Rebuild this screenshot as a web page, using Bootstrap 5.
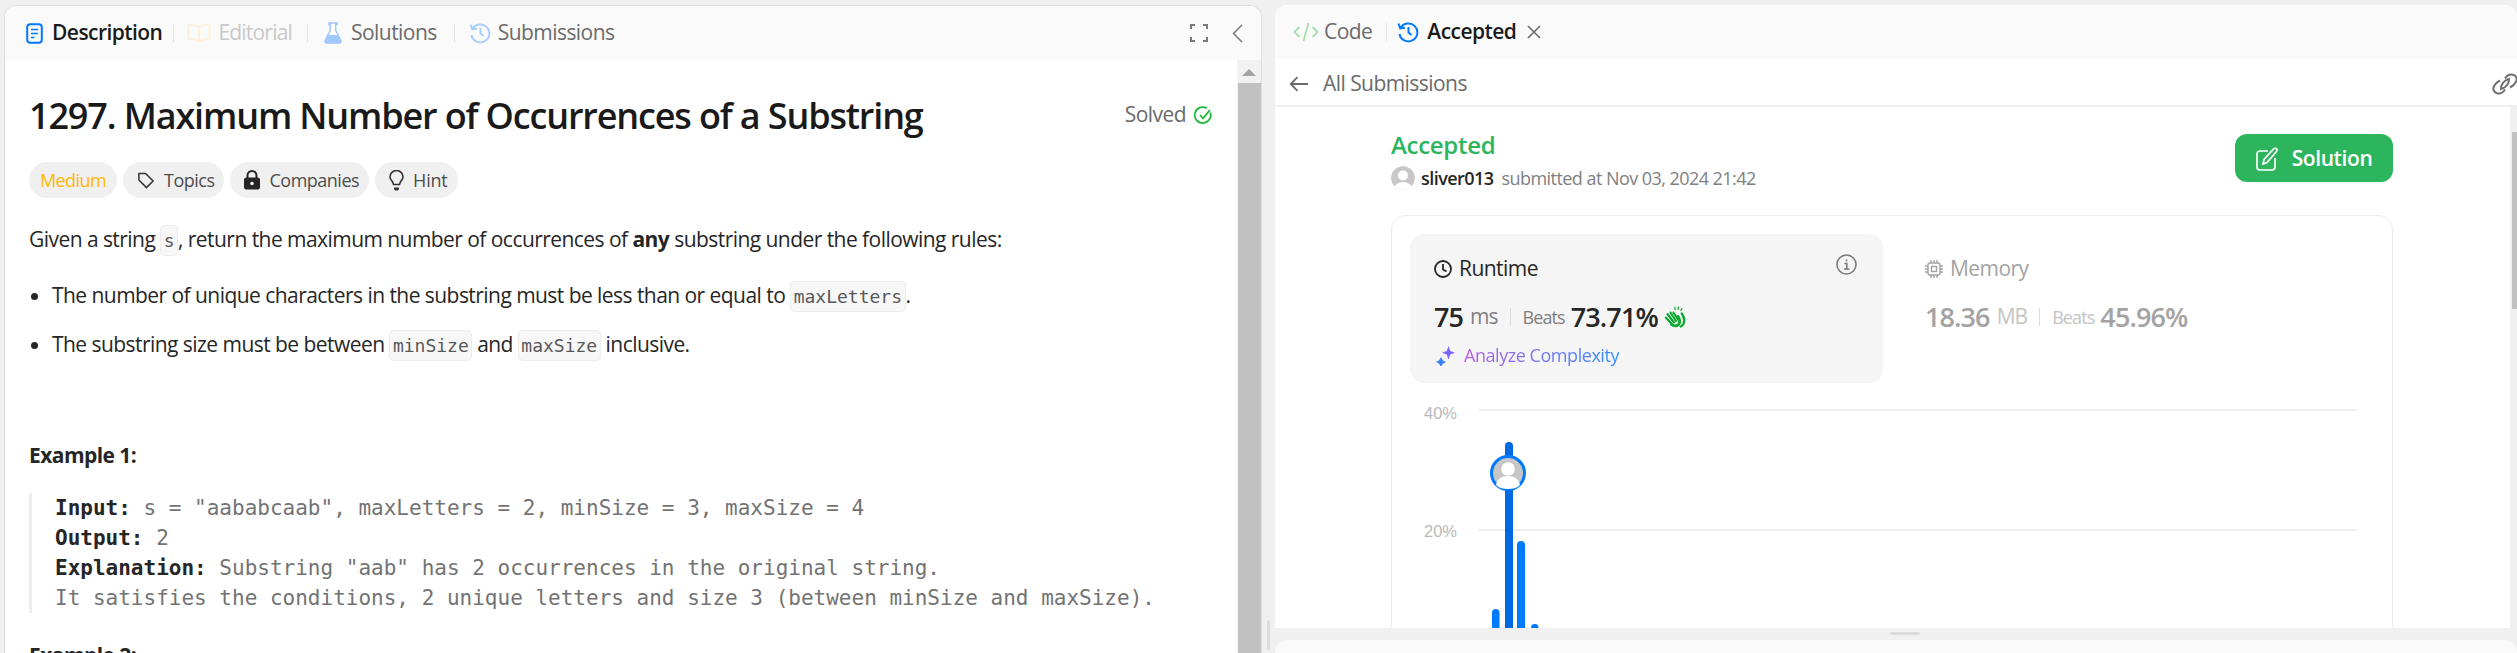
<!DOCTYPE html>
<html lang="en">

<head>
  <meta charset="UTF-8">
  <meta name="viewport" content="width=device-width, initial-scale=1.0">
  <title>1297. Maximum Number of Occurrences of a Substring</title>
  <link href="https://cdn.jsdelivr.net/npm/bootstrap@5.3.3/dist/css/bootstrap.min.css" rel="stylesheet">
  <script src="https://cdn.jsdelivr.net/npm/bootstrap@5.3.3/dist/js/bootstrap.bundle.min.js"></script>
  <style>
    html, body { height: 653px; overflow: hidden; }
    body { background: #f0f0f0; font-family: "Open Sans", "Noto Sans", sans-serif; font-size: 21px; color: #262626; letter-spacing: -.55px; }
    svg { display: block; flex: none; }
    .workspace { padding: 5px 0 0 4px; height: 653px; }

    /* left panel */
    .left-panel { width: 1258px; height: 648px; background: #fff; border: 1px solid #dedede; border-bottom: 0; border-radius: 12px 12px 0 0; overflow: hidden; }
    .tabbar { height: 54px; background: #fafafa; flex: none; }
    .left-tabs { padding: 0 18px 0 21px; }
    .tab { color: #6b6b6b; height: 54px; gap: 9px; }
    .tab-on { color: #1a1a1a; font-weight: 600; }
    .tab-off { color: #c9c9c9; letter-spacing: -.8px; }
    .tab-tight { gap: 7px; }
    .tab-sep { width: 1px; height: 18px; background: #e4e4e4; flex: none; margin: 0 14px; }
    .sep-a { margin: 0 13px 0 11px; }
    .sep-b { margin: 0 16px 0 15px; }
    .sep-c { margin: 0 14px 0 17px; }
    .left-scroll { width: 24px; background: #f1f1f1; flex: none; }
    .left-scroll .arrow-up { width: 0; height: 0; margin: 9px auto 7px; border: 7px solid transparent; border-top: 0; border-bottom: 7px solid #a3a3a3; }
    .left-scroll .thumb { margin-left: 1px; background: #c1c1c1; height: 600px; }
    .problem { padding: 0 0 0 24px; min-width: 0; overflow: hidden; }
    .problem-title { font-size: 36px; line-height: 54px; font-weight: 600; margin: 29px 0 19px; color: #1a1a1a; letter-spacing: -1.15px; }
    .solved { color: #6b6b6b; margin: 8px 24px 0 0; gap: 8px; }
    .chips { gap: 6px; }
    .chip { height: 36px; border-radius: 18px; background: #f0f0f0; font-size: 18px; padding: 0 10px 0 14px; color: #4d4d4d; gap: 9px; letter-spacing: -.5px; }
    .chip-medium { color: #ffb800; padding: 0 11px; letter-spacing: -.6px; }
    .chip-hint { letter-spacing: -.2px; }
    .problem p { line-height: 30px; margin: 0; }
    .first-para { margin-top: 26px !important; }
    .problem ul { padding-left: 23px; margin: 26px 0 0; line-height: 30px; }
    .problem li + li { margin-top: 19px; }
    .inline-code { font-family: "DejaVu Sans Mono", monospace; font-size: 18px; line-height: 1; letter-spacing: 0; color: #595959; background: #f7f7f7; border: 1px solid #ececec; border-radius: 5px; padding: 4px 2.5px; }
    .example-name { font-weight: 700; margin-top: 81px !important; }
    .example-next { margin-top: 0 !important; }
    .example-quote { border-left: 3px solid #ededed; margin: 23px 0 27px; padding-left: 23px; font-family: "DejaVu Sans Mono", monospace; letter-spacing: 0; line-height: 30px; color: #737373; }
    .example-quote div { white-space: nowrap; }
    .example-quote b { color: #262626; }

    /* gutters */
    .gutter-v { width: 13px; flex: none; }
    .gutter-v span { display: block; width: 3px; height: 30px; background: #dcdcdc; border-radius: 2px; margin: 615px 0 0 5px; }
    .gutter-h { height: 12px; flex: none; }
    .gutter-h span { display: block; width: 30px; height: 3px; background: #dcdcdc; border-radius: 2px; margin: 4px auto 0 615px; }

    /* right panel */
    .right-col { width: 1242px; }
    .right-panel { height: 623px; background: #fff; border-radius: 12px 12px 0 0; overflow: hidden; flex: none; }
    .lower-panel { background: #fafafa; border-radius: 12px 12px 0 0; }
    .right-tabs { padding-left: 18px; }
    .code-tab { gap: 5px; }
    .accepted-tab { margin-left: -4px; gap: 8px; }
    .tab-close { margin-left: 11px; }
    .crumbs { height: 48px; border-bottom: 2px solid #efefef; flex: none; color: #6b6b6b; padding: 4px 0 0 14px; }
    .crumbs span { margin-left: 15px; }
    .link-ico { margin-left: auto; margin-right: -1px; }
    .panel-fill { min-height: 0; }
    .right-scroll { width: 7px; background: #f0f0f0; flex: none; }
    .right-scroll div { margin: 25px 0 0 2px; width: 5px; height: 177px; background: #c1c1c1; }
    .sub-body { min-width: 0; padding-left: 116px; overflow: hidden; }
    .sub-inner { width: 1002px; }
    .sub-head { padding-top: 22px; }
    .verdict { font-size: 24px; font-weight: 600; color: #2cb55d; line-height: 32px; letter-spacing: -.3px; }
    .who { font-size: 18px; line-height: 24px; color: #808080; margin-top: 5px; letter-spacing: -.55px; }
    .who b { color: #262626; font-weight: 600; }
    .who-pic { width: 24px; height: 24px; border-radius: 50%; margin-right: 6px; }
    .solution-btn { background: #2db55d; border-radius: 12px; color: #fff; width: 158px; height: 48px; font-size: 21px; font-weight: 600; margin-top: 5px; gap: 14px; letter-spacing: -.4px; padding-top: 1px; }
    .stats-card { margin-top: 25px; border: 1px solid #ededed; border-radius: 14px; height: 600px; }
    .stats-row { padding: 18px 0 0 18px; }
    .stat-box { width: 473px; height: 149px; padding: 0 0 0 24px; border-radius: 14px; background: #f5f5f5; }
    .stat-mem { padding: 0 0 0 42px; color: #a3a3a3; }
    .stat-head { height: 63px; padding-top: 6px; gap: 7px; }
    .info-ico { margin: -8px 26px 0 auto; }
    .stat-num { font-size: 27px; font-weight: 600; line-height: 40px; letter-spacing: -.9px; }
    .stat-unit { font-size: 21px; color: #808080; margin-left: 7px; letter-spacing: -1px; }
    .stat-sep { width: 1px; height: 18px; background: #dcdcdc; margin: 0 12px; }
    .stat-beats { font-size: 18px; color: #808080; margin-right: 6px; letter-spacing: -.9px; }
    .stat-mem .stat-num { color: #a3a3a3; }
    .stat-mem .stat-unit { color: #c4c4c4; }
    .stat-mem .stat-beats { color: #c4c4c4; }
    .clap-ico { margin-left: 6px; }
    .analyze { font-size: 18px; margin-top: 5px; gap: 8px; padding-left: 2px; letter-spacing: -.45px; }
    .analyze span { background: linear-gradient(90deg, #b65de6, #2f8cff); -webkit-background-clip: text; background-clip: text; color: transparent; }
    .chart text { font-family: "Liberation Sans", sans-serif; font-size: 16.5px; fill: #b8b8b8; letter-spacing: 0; }
  </style>
</head>

<body>
  <div class="workspace d-flex">

    <!-- Problem panel -->
    <div class="left-panel d-flex flex-column">
      <div class="tabbar left-tabs d-flex align-items-center">
        <div class="tab tab-on d-flex align-items-center">
          <svg width="17" height="21" viewBox="0 0 17 21" fill="none" stroke="#007aff" stroke-width="2"><rect x="1.2" y="1.2" width="14.6" height="18.6" rx="3"/><path d="M5 6.500h7M5 10.500h7M5 14.500h3.500" stroke-width="1.600"/></svg>
          <span>Description</span>
        </div>
        <div class="tab-sep sep-a"></div>
        <div class="tab tab-off tab-tight d-flex align-items-center">
          <svg width="24" height="20" viewBox="0 0 24 20" fill="none" stroke="#fdf0dc" stroke-width="2"><path d="M12 4.500C10 2.500 6 1.500 1.500 1.500v14.500c4.500 0 8.500 1 10.500 2.500 2-1.500 6-2.500 10.500-2.500V1.500C18 1.500 14 2.500 12 4.500zM12 4.500v14"/></svg>
          <span>Editorial</span>
        </div>
        <div class="tab-sep sep-b"></div>
        <div class="tab d-flex align-items-center">
          <svg width="18" height="22" viewBox="0 0 18 22"><path d="M5 1h8v1.500h-1.300v5.800l5.200 10.200c.7 1.400-.2 2.500-1.600 2.500H2.700c-1.400 0-2.300-1.100-1.600-2.500L6.300 8.300V2.500H5z" fill="#fff" stroke="#a3c8ff" stroke-width="1.500"/><path d="M3.800 13h10.400l2.700 5.500c.7 1.400-.2 2.500-1.600 2.500H2.700c-1.400 0-2.300-1.100-1.600-2.500z" fill="#a3c8ff"/></svg>
          <span>Solutions</span>
        </div>
        <div class="tab-sep sep-c"></div>
        <div class="tab tab-tight d-flex align-items-center">
          <svg width="22" height="22" viewBox="0 0 22 22" fill="none" stroke="#a8d0ff" stroke-width="2"><path d="M3.500 7a9 9 0 1 1-1 6M1.500 2.500l1.700 4.800 4.800-.6M11.500 6v5.500l3 2.500"/></svg>
          <span>Submissions</span>
        </div>
        <svg class="ms-auto" width="18" height="18" viewBox="0 0 18 18" fill="none" stroke="#7a7a7a" stroke-width="2"><path d="M1 5V1h4M13 1h4v4M17 13v4h-4M5 17H1v-4"/></svg>
        <svg class="ms-4" width="11" height="19" viewBox="0 0 11 19" fill="none" stroke="#7a7a7a" stroke-width="1.500"><path d="M10 1 1.500 9.500 10 18"/></svg>
      </div>
      <div class="d-flex flex-grow-1 panel-fill">
        <div class="problem flex-grow-1">
          <div class="d-flex justify-content-between align-items-center">
            <h1 class="problem-title">1297. Maximum Number of Occurrences of a Substring</h1>
            <div class="solved d-flex align-items-center">
              <span>Solved</span>
              <svg width="19" height="19" viewBox="0 0 19 19" fill="none" stroke="#1cba3a" stroke-width="1.800"><path d="M16.300 6.500a8 8 0 1 1-3.500-4.300M6 9l3 3.300 7-8.300"/></svg>
            </div>
          </div>
          <div class="chips d-flex">
            <div class="chip chip-medium d-flex align-items-center">Medium</div>
            <div class="chip d-flex align-items-center">
              <svg width="18" height="19" viewBox="0 0 19 19" fill="none" stroke="#333" stroke-width="1.600"><path d="M2 2h7l8 8-7 7-8-8zM5.500 5.500h.1"/></svg>
              <span>Topics</span>
            </div>
            <div class="chip d-flex align-items-center">
              <svg width="16" height="20" viewBox="0 0 16 20"><path d="M3.500 8V5.500a4.500 4.500 0 0 1 9 0V8" fill="none" stroke="#262626" stroke-width="2"/><rect x="0" y="7.500" width="16" height="12" rx="2.500" fill="#262626"/><circle cx="8" cy="13.500" r="1.800" fill="#f0f0f0"/></svg>
              <span>Companies</span>
            </div>
            <div class="chip chip-hint d-flex align-items-center">
              <svg width="15" height="21" viewBox="0 0 15 21" fill="none" stroke="#333" stroke-width="1.600"><path d="M4.500 14.500C4 11 1 10 1 7a6.500 6.500 0 0 1 13 0c0 3-3 4-3.500 7.500z"/><path d="M5 17.500h5v1.500l-1 1.500H6L5 19z" fill="#333" stroke="none"/></svg>
              <span>Hint</span>
            </div>
          </div>
          <p class="first-para">Given a string <code class="inline-code">s</code>, return the maximum number of occurrences of <b>any</b> substring under the following rules:</p>
          <ul>
            <li>The number of unique characters in the substring must be less than or equal to <code class="inline-code">maxLetters</code>.</li>
            <li>The substring size must be between <code class="inline-code">minSize</code> and <code class="inline-code">maxSize</code> inclusive.</li>
          </ul>
          <p class="example-name">Example 1:</p>
          <div class="example-quote">
            <div><b>Input:</b> s = "aababcaab", maxLetters = 2, minSize = 3, maxSize = 4</div>
            <div><b>Output:</b> 2</div>
            <div><b>Explanation:</b> Substring "aab" has 2 occurrences in the original string.</div>
            <div>It satisfies the conditions, 2 unique letters and size 3 (between minSize and maxSize).</div>
          </div>
          <p class="example-name example-next">Example 2:</p>
        </div>
        <div class="left-scroll">
          <div class="arrow-up"></div>
          <div class="thumb"></div>
        </div>
      </div>
    </div>

    <div class="gutter-v"><span></span></div>

    <div class="right-col d-flex flex-column">
      <!-- Submission panel -->
      <div class="right-panel d-flex flex-column">
        <div class="tabbar right-tabs d-flex align-items-center">
          <div class="tab code-tab d-flex align-items-center">
            <svg width="26" height="20" viewBox="0 0 26 20" fill="none" stroke="#a5dfae" stroke-width="1.800"><path d="M6.500 5 1.500 10l5 5M19.500 5l5 5-5 5M15.500 1l-5 18"/></svg>
            <span>Code</span>
          </div>
          <div class="tab-sep"></div>
          <div class="tab tab-on accepted-tab d-flex align-items-center">
            <svg width="22" height="22" viewBox="0 0 22 22" fill="none" stroke="#007aff" stroke-width="2"><path d="M3.500 7a9 9 0 1 1-1 6M1.500 2.500l1.700 4.800 4.800-.6M11.500 6v5.500l3 2.500"/></svg>
            <span>Accepted</span>
          </div>
          <svg class="tab-close" width="14" height="14" viewBox="0 0 14 14" fill="none" stroke="#6b6b6b" stroke-width="1.600"><path d="M1 1l12 12M13 1 1 13"/></svg>
        </div>
        <div class="crumbs d-flex align-items-center">
          <svg width="19" height="16" viewBox="0 0 19 16" fill="none" stroke="#6b6b6b" stroke-width="1.800"><path d="M19 8H2M8.500 1.200 1.700 8l6.800 6.800"/></svg>
          <span>All Submissions</span>
          <svg class="link-ico" width="26" height="22" viewBox="0 0 26 22" fill="none" stroke="#707070" stroke-width="2"><path d="M13 5.500C15 2.500 18 1 21 1.800c3.500 1 4.500 4 3 7-1 2-3.500 4.500-6 5.700M13 16.500c-2 3-5 4.500-8 3.700-3.500-1-4.500-4-3-7 1-2 3.500-4.500 6-5.700M9.500 17c-1.500-3 1-7.500 4-9.500 2-1.300 3.500-1.500 4.500-1.200M16.500 5c1.500 3-1 7.500-4 9.500-2 1.300-3.500 1.500-4.500 1.200"/></svg>
        </div>
        <div class="d-flex flex-grow-1 panel-fill">
          <div class="sub-body flex-grow-1">
            <div class="sub-inner">
              <div class="sub-head d-flex justify-content-between">
                <div>
                  <div class="verdict">Accepted</div>
                  <div class="who d-flex align-items-center">
                    <svg class="who-pic" viewBox="0 0 24 24"><circle cx="12" cy="12" r="12" fill="#c8c8c8"/><circle cx="12" cy="9.500" r="5" fill="#fff"/><ellipse cx="12" cy="23" rx="9" ry="7" fill="#fff"/></svg>
                    <b>sliver013</b><span class="ms-2">submitted at Nov 03, 2024 21:42</span>
                  </div>
                </div>
                <div class="solution-btn d-flex align-items-center justify-content-center">
                  <svg width="22" height="24" viewBox="0 0 22 24" fill="none" stroke="#fff" stroke-width="1.700"><path d="M12 4H4a3 3 0 0 0-3 3v13a3 3 0 0 0 3 3h12a3 3 0 0 0 3-3v-9"/><path d="M7 17l1-4.500L17.500 2c1-1 2.500-1 3.200 0s.3 2-.7 3L11 15.500z"/></svg>
                  <span>Solution</span>
                </div>
              </div>
              <div class="stats-card">
                <div class="stats-row d-flex">
                  <div class="stat-box">
                    <div class="stat-head d-flex align-items-center">
                      <svg width="18" height="18" viewBox="0 0 18 18" fill="none" stroke="#262626" stroke-width="1.800"><circle cx="9" cy="9" r="8"/><path d="M9 4v5.500l3.500 2"/></svg>
                      <span>Runtime</span>
                      <svg class="info-ico" width="21" height="21" viewBox="0 0 21 21" fill="none" stroke="#7a7a7a" stroke-width="1.600"><circle cx="10.500" cy="10.500" r="9.500"/><path d="M8.500 9.500h2.300V15M8 15h5.500M10.500 5.500v1.800"/></svg>
                    </div>
                    <div class="d-flex align-items-center">
                      <span class="stat-num">75</span><span class="stat-unit">ms</span><span class="stat-sep"></span><span class="stat-beats">Beats</span><span class="stat-num">73.71%</span>
                      <svg class="clap-ico" width="23" height="22" viewBox="0 0 23 22" fill="none" stroke="#0aa82e" stroke-linecap="round"><path d="M9.500 6.500l4.500 7M6.500 6.500l5.500 8.500M3.500 8l6.500 8.500M1.800 11.500l6 6.500" stroke-width="2.100"/><path d="M7.500 18.500c3 2.500 7 1.500 8-1.500.6-2 0-4-1.500-6.500" stroke-width="2.800"/><path d="M17.800 7.500c2.300 3.500 3.200 7.500 1.400 10.800-.6 1-1.500 1.800-2.500 2.200" stroke-width="2.300"/><path d="M11 1v2.500M14.500 1.200l-.5 2.300M18 2.500l-1.200 2" stroke-width="1.200"/></svg>
                    </div>
                    <div class="analyze d-flex align-items-center">
                      <svg width="20" height="20" viewBox="0 0 20 20"><path d="M12.500 0l1.700 5 4.800 1.700-4.800 1.700-1.700 5-1.700-5L6 6.700l4.800-1.700z" fill="#7b61ff"/><path d="M5 11l1.800 3.200L10 16l-3.200 1.800L5 21l-1.800-3.200L0 16l3.200-1.800z" fill="#3c82f6"/></svg>
                      <span>Analyze Complexity</span>
                    </div>
                  </div>
                  <div class="stat-mem">
                    <div class="stat-head d-flex align-items-center">
                      <svg width="18" height="18" viewBox="0 0 18 18" fill="none" stroke="#a3a3a3" stroke-width="1.400"><rect x="3" y="3" width="12" height="12" rx="2"/><rect x="6.500" y="6.500" width="5" height="5"/><path d="M6 0v3M9 0v3M12 0v3M6 15v3M9 15v3M12 15v3M0 6h3M0 9h3M0 12h3M15 6h3M15 9h3M15 12h3"/></svg>
                      <span>Memory</span>
                    </div>
                    <div class="d-flex align-items-center">
                      <span class="stat-num">18.36</span><span class="stat-unit">MB</span><span class="stat-sep"></span><span class="stat-beats">Beats</span><span class="stat-num">45.96%</span>
                    </div>
                  </div>
                </div>
                <!-- distribution chart -->
                <svg class="chart" width="1000" height="260" viewBox="0 0 1000 260">
                  <text x="32" y="36">40%</text>
                  <text x="32" y="154">20%</text>
                  <path d="M87 27H965M87 147H965" stroke="#eee" stroke-width="2"/>
                  <rect x="100" y="226" width="7.500" height="40" rx="3.700" fill="#007aff"/>
                  <rect x="113" y="59" width="8" height="210" rx="4" fill="#0068e0"/>
                  <rect x="125" y="158" width="8" height="110" rx="4" fill="#007aff"/>
                  <rect x="139" y="241" width="7.500" height="30" rx="3.700" fill="#007aff"/>
                  <circle cx="116" cy="90" r="16.500" fill="#c6c6c6" stroke="#007aff" stroke-width="3"/>
                  <circle cx="116" cy="86" r="6.800" fill="#fff"/>
                  <path d="M104 102c1-6 6-9 12-9s11 3 12 9c-3 3-7 4-12 4s-9-1-12-4z" fill="#fff"/>
                </svg>
              </div>
            </div>
          </div>
          <div class="right-scroll"><div></div></div>
        </div>
      </div>
      <div class="gutter-h"><span></span></div>
      <div class="lower-panel flex-grow-1"></div>
    </div>
  </div>
</body>

</html>
